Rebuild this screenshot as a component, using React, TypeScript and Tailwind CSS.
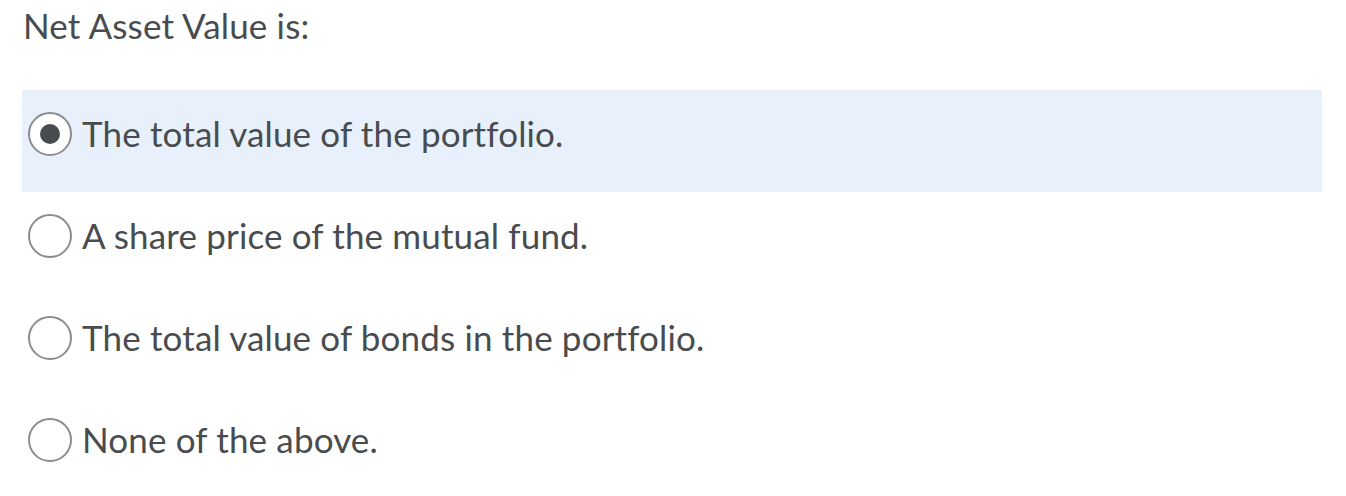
const options = [
  'The total value of the portfolio.',
  'A share price of the mutual fund.',
  'The total value of bonds in the portfolio.',
  'None of the above.',
];

function Radio({ checked }: { checked: boolean }) {
  return (
    <span className="w-[44px] h-[44px] shrink-0 rounded-full border-2 border-[#8a8d8f] bg-white flex items-center justify-center">
      {checked && <span className="w-[20px] h-[20px] rounded-full bg-[#494c4e]" />}
    </span>
  );
}

export default function App() {
  const selected = 0;
  return (
    <div className="w-[1346px] h-[496px] bg-white text-[#494c4e] font-['Lato',sans-serif] tracking-[0.15px] overflow-hidden">
      <div className="pl-[23px] pt-[3px] h-[90px] text-[35px] leading-[44px]">Net Asset Value is:</div>
      <div className="w-[1300px] ml-[22px]">
        {options.map((opt, i) => (
          <div
            key={opt}
            className={`h-[102px] flex items-start gap-[10px] pl-[6px] pt-[22px] ${i === selected ? 'bg-[#e8f0fc]' : ''}`}
          >
            <Radio checked={i === selected} />
            <span className="text-[35px] leading-[44px] -mt-[1px]">{opt}</span>
          </div>
        ))}
      </div>
    </div>
  );
}
